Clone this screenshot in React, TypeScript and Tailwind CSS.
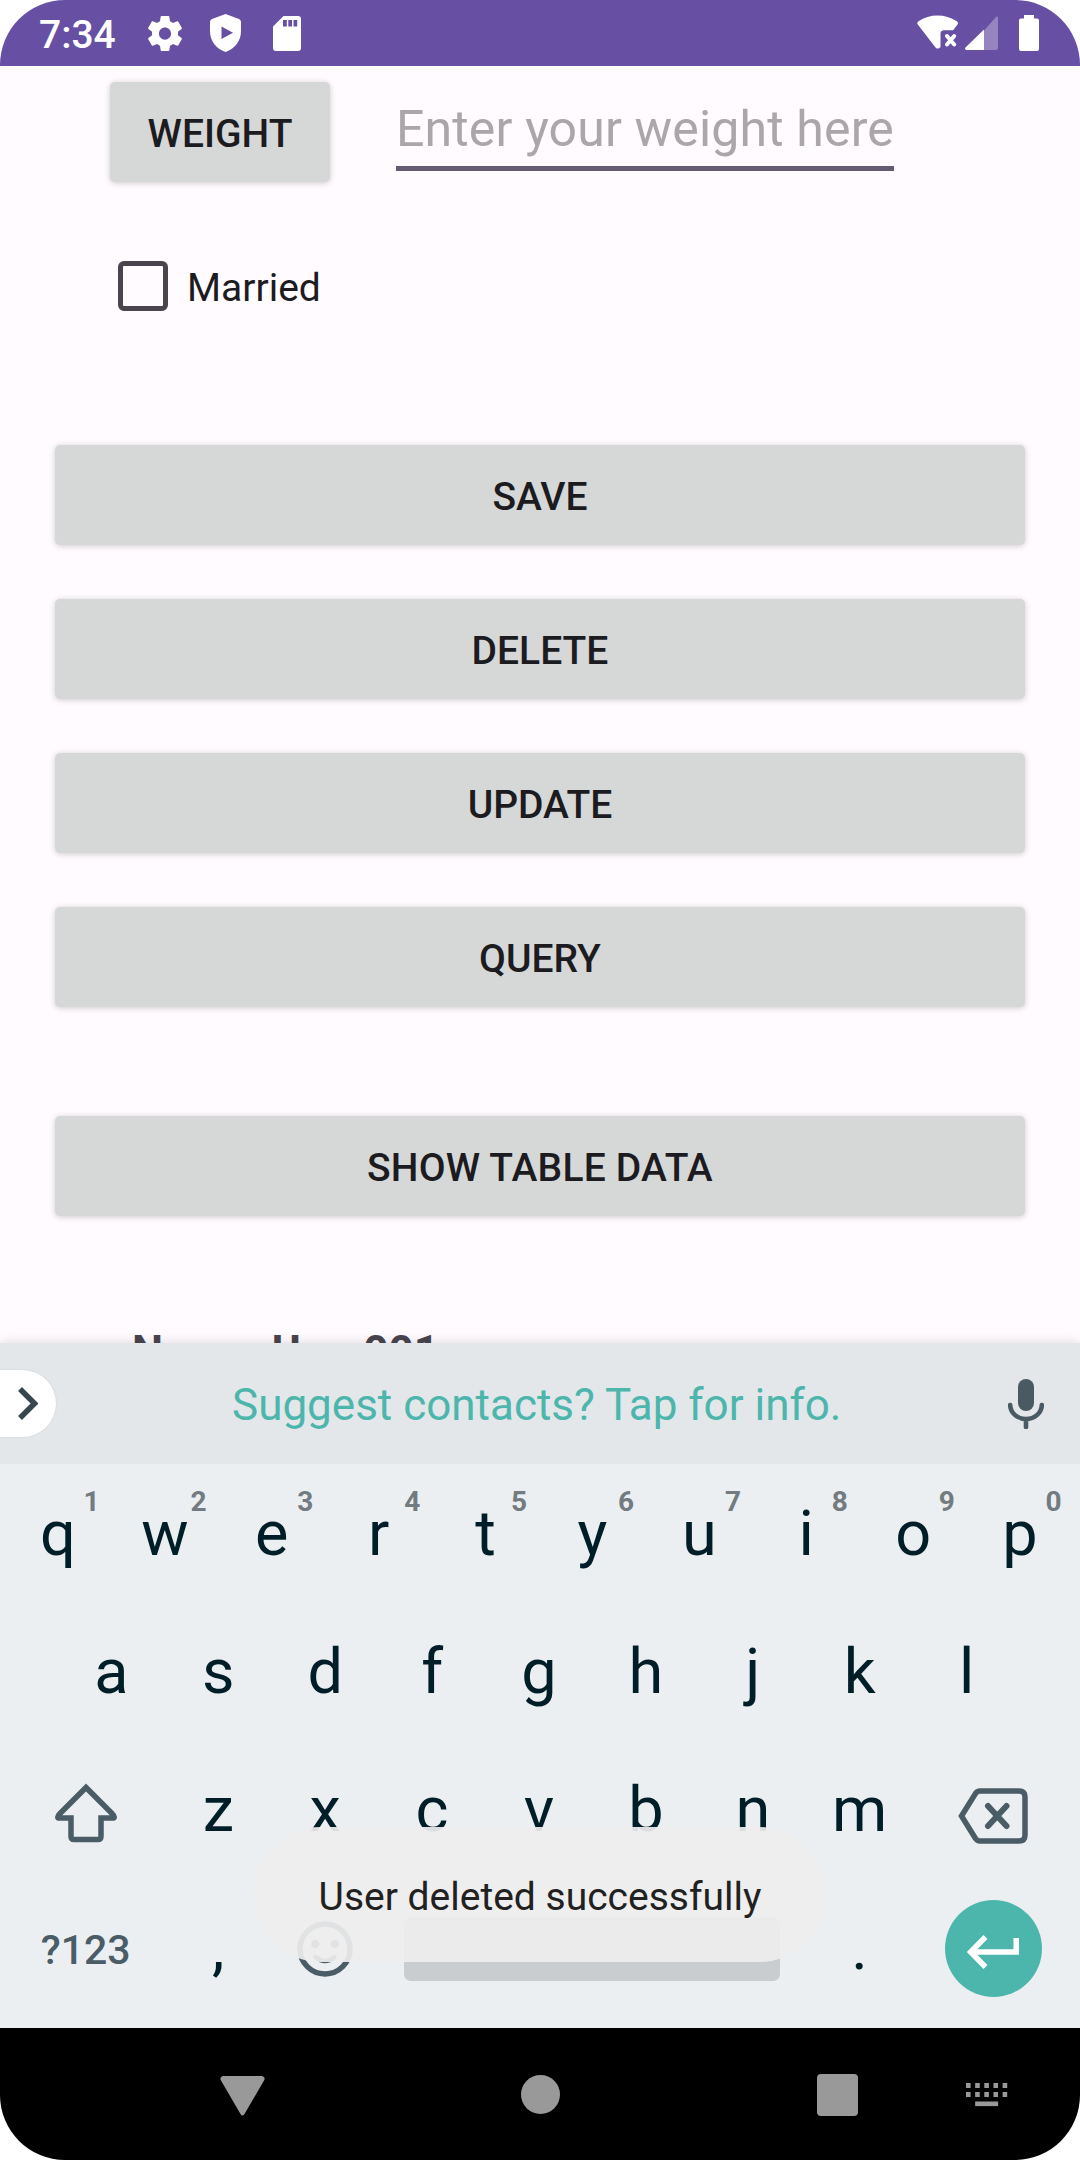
import React from "react";

function StatusBar() {
  return (
    <header className="flex h-[66px] shrink-0 items-center bg-[#6750a4] pl-[39px] pr-[41px] text-white">
      <span className="mt-[3px] w-[109px] text-[39px] font-medium leading-[46px]">7:34</span>
      <svg className="h-[35px] w-[34px]" viewBox="2.2 2 19.6 20" preserveAspectRatio="none" fill="currentColor">
        <path d="M19.43 12.98c.04-.32.07-.64.07-.98s-.03-.66-.07-.98l2.11-1.65c.19-.15.24-.42.12-.64l-2-3.46c-.12-.22-.39-.3-.61-.22l-2.49 1c-.52-.4-1.08-.73-1.69-.98l-.38-2.65C14.46 2.18 14.25 2 14 2h-4c-.25 0-.46.18-.49.42l-.38 2.65c-.61.25-1.17.59-1.69.98l-2.49-1c-.23-.09-.49 0-.61.22l-2 3.46c-.13.22-.07.49.12.64l2.11 1.65c-.04.32-.07.65-.07.98s.03.66.07.98l-2.11 1.65c-.19.15-.24.42-.12.64l2 3.46c.12.22.39.3.61.22l2.49-1c.52.4 1.08.73 1.69.98l.38 2.65c.03.24.24.42.49.42h4c.25 0 .46-.18.49-.42l.38-2.65c.61-.25 1.17-.59 1.69-.98l2.49 1c.23.09.49 0 .61-.22l2-3.46c.12-.22.07-.49-.12-.64l-2.11-1.65zM12 15.5c-1.93 0-3.5-1.57-3.5-3.5s1.57-3.5 3.5-3.5 3.5 1.57 3.5 3.5-1.57 3.5-3.5 3.5z" />
      </svg>
      <svg className="ml-[28px] h-[38px] w-[31px]" viewBox="0 0 31 38" fill="currentColor">
        <path fillRule="evenodd" d="M15.500 0 29 5q2 .8 2 3v9c0 10-6 17.500-15.500 21C6 34.500 0 27 0 17V8q0-2.200 2-3zM11.500 12.500v12.500L23 18.700z" />
      </svg>
      <svg className="ml-[32px] h-[35px] w-[28px]" viewBox="0 0 28 35" fill="currentColor">
        <path fillRule="evenodd" d="M10.500 0H25q3 0 3 3v29q0 3-3 3H3q-3 0-3-3V10.500zM10 4v6.500h3.800V4zM15.300 4v6.500H19V4zM20.500 4v6.500h3.700V4z" />
      </svg>
      <div className="ml-auto flex items-center">
        <svg className="h-[36px] w-[42px]" viewBox="0 0 42 36">
          <path fill="white" d="M.8 9.500Q-.6 7.700 1.500 6.300 10 .5 20.500.5T39.800 6.300q2 1.400.7 3.200l-4.400 5.700H27q-3.500 0-3.500 3.500V32q-2.500 3-5 .4z" />
          <path stroke="white" strokeWidth="4" strokeLinecap="round" d="m30 21 7.200 8.500M37.200 21 30 29.500" />
        </svg>
        <svg className="ml-[6px] h-[34px] w-[33px]" viewBox="0 0 33 34">
          <path fill="white" fillOpacity=".3" d="M19 14.500 31 1q2-1.200 2 1.200V32q0 2-2 2H19z" />
          <path fill="white" d="M19 13.500V34H1.500q-2.500-.6-1-2.400z" />
        </svg>
        <svg className="ml-[21px] h-[36px] w-[20px]" viewBox="0 0 20 36" fill="white">
          <path d="M5 0h10v3.500h3q2 0 2 2V34q0 2-2 2H2q-2 0-2-2V5.500q0-2 2-2h3z" />
        </svg>
      </div>
    </header>
  );
}

function RaisedButton({ label, className }: { label: string; className: string }) {
  return (
    <button
      className={
        "flex h-[100px] shrink-0 items-center justify-center rounded-[5px] bg-[#d6d8d7] pt-[4px] text-[39px] font-medium leading-[46px] text-[#1c1b1f] shadow-[0_1px_6px_rgba(0,0,0,0.2)] " +
        className
      }
    >
      {label}
    </button>
  );
}

function Form() {
  return (
    <main className="flex h-[1277px] shrink-0 flex-col overflow-hidden bg-[#fffbff] px-[55px] pt-[16px]">
      <div className="flex h-[100px] shrink-0 items-start pl-[55px]">
        <RaisedButton label="WEIGHT" className="w-[220px]" />
        <div className="ml-[66px] h-[89px] w-[498px] border-b-[5.5px] border-[#645b73] pt-[17px] text-[50px] leading-[60px] tracking-[0.15px] whitespace-nowrap text-[#a9a7aa]">
          Enter your weight here
        </div>
      </div>
      <label className="mt-[79px] flex h-[50px] shrink-0 items-center pl-[63px] text-[39px] leading-[46px] text-[#1c1b1f]">
        <span className="size-[50px] rounded-[6px] border-[5.5px] border-[#49454f]" />
        <span className="ml-[19px] mt-[4px]">Married</span>
      </label>
      <div className="mt-[134px] flex flex-col gap-[54px]">
        <RaisedButton label="SAVE" className="w-full" />
        <RaisedButton label="DELETE" className="w-full" />
        <RaisedButton label="UPDATE" className="w-full" />
        <RaisedButton label="QUERY" className="w-full" />
      </div>
      <RaisedButton label="SHOW TABLE DATA" className="mt-[109px] w-full tracking-[0.2px]" />
      <p className="mt-[110px] shrink-0 pl-[77px] text-[44px] font-bold leading-[52px] text-[#49454f]">Name: User001</p>
    </main>
  );
}

function LetterKey({ label, hint }: { label: string; hint?: string }) {
  return (
    <div className="relative flex h-[138px] w-[106.9px] items-center justify-center pt-[2px] pr-[2px] text-[63px] leading-[74px] text-[#001e28]">
      {label}
      {hint && (
        <span className="absolute left-[78px] top-[21px] text-[28px] font-bold leading-[33px] text-[#717b80]">{hint}</span>
      )}
    </div>
  );
}

const topRow: [string, string][] = [
  ["q", "1"],
  ["w", "2"],
  ["e", "3"],
  ["r", "4"],
  ["t", "5"],
  ["y", "6"],
  ["u", "7"],
  ["i", "8"],
  ["o", "9"],
  ["p", "0"],
];

function Keyboard() {
  return (
    <section className="relative flex h-[685px] shrink-0 flex-col bg-[#ebeff2] shadow-[0_0_12px_rgba(0,0,0,0.14)]">
      <div className="flex h-[121px] shrink-0 items-center bg-[#e3e7ea]">
        <div className="flex h-[67px] w-[56px] items-center rounded-r-full bg-white pl-[18px] shadow-[0_0_2px_rgba(0,0,0,0.12)]">
          <svg className="h-[33px] w-[20px]" viewBox="0 0 20 33" fill="none" stroke="#37474f" strokeWidth="5.500">
            <path d="m2 2 14.500 14.500L2 31" />
          </svg>
        </div>
        <span className="mt-[3px] flex-1 pl-[176px] text-[44px] leading-[52px] text-[#4db6ac]">
          Suggest contacts? Tap for info.
        </span>
        <svg className="mr-[36px] h-[50px] w-[36px]" viewBox="0 0 36 50" fill="none" stroke="#4a5a62">
          <rect x="10" y="0" width="16" height="32" rx="8" fill="#4a5a62" stroke="none" />
          <path d="M2.200 26a15.800 14 0 0 0 31.600 0M18 40v8" strokeWidth="4.600" strokeLinecap="round" />
        </svg>
      </div>
      <div className="flex justify-center">
        {topRow.map(([k, n]) => (
          <LetterKey key={k} label={k} hint={n} />
        ))}
      </div>
      <div className="flex justify-center">
        {"asdfghjkl".split("").map((k) => (
          <LetterKey key={k} label={k} />
        ))}
      </div>
      <div className="flex justify-center">
        <div className="flex h-[138px] w-[160.4px] items-center justify-center">
          <svg className="mt-[7px] h-[62px] w-[62px]" viewBox="0 0 62 62" fill="none" stroke="#4a5c65" strokeWidth="5.500" strokeLinejoin="round">
            <path d="M31 5.500 5 31.500q-4.500 4.500 0 4.500h11v18.500q0 3 3 3h24q3 0 3-3V36h11q4.500 0 0-4.500z" strokeLinejoin="miter" />
          </svg>
        </div>
        {"zxcvbnm".split("").map((k) => (
          <LetterKey key={k} label={k} />
        ))}
        <div className="flex h-[138px] w-[160.4px] items-center justify-center pr-[3px]">
          <svg className="mt-[14px] h-[56px] w-[70px]" viewBox="0 0 70 56" fill="none" stroke="#4a5c65" strokeWidth="5.500">
            <path d="M3.500 28 17.500 5.500Q19.200 3 22 3h39q6 0 6 6v38q0 6-6 6H22q-2.800 0-4.500-2.500z" />
            <path strokeLinecap="round" strokeWidth="6" d="m30 18 18.500 20M48.500 18 30 38" />
          </svg>
        </div>
      </div>
      <div className="flex justify-center">
        <div className="flex h-[138px] w-[160.4px] items-center justify-center pt-[5px] text-[41px] font-medium leading-[48px] text-[#4a5c65]">
          ?123
        </div>
        <LetterKey label="," />
        <div className="flex h-[138px] w-[106.9px] items-center justify-center">
          <svg className="mt-[3px] mr-[2px] size-[56px]" viewBox="0 0 56 56" fill="none" stroke="#4a5c65">
            <circle cx="28" cy="28" r="25" strokeWidth="5.500" />
            <circle cx="18.300" cy="23" r="4" fill="#4a5c65" stroke="none" />
            <circle cx="37.700" cy="23" r="4" fill="#4a5c65" stroke="none" />
            <path d="M18.500 36q9.500 8 19 0" strokeWidth="4.500" strokeLinecap="round" />
          </svg>
        </div>
        <div className="flex h-[138px] w-[427.6px] items-center pl-[24px]">
          <div className="mt-[3px] h-[64px] w-[376px] rounded-[7px] bg-[#c9cdd0]" />
        </div>
        <LetterKey label="." />
        <div className="flex h-[138px] w-[160.4px] items-center justify-center pr-[2px]">
          <div className="mt-[3px] flex size-[97px] items-center justify-center rounded-full bg-[#4db6ac]">
            <svg className="mt-[6px] h-[34px] w-[52px]" viewBox="0 0 52 34" fill="none" stroke="white" strokeWidth="5.500">
              <path d="M49.200 3v14H4M18.500 2 3.700 17l14.800 15" />
            </svg>
          </div>
        </div>
      </div>
      <div className="absolute left-[253px] top-[484px] flex h-[135px] w-[574px] items-center justify-center rounded-full bg-[#eeeeee]/92 pt-[4px] text-[39px] leading-[46px] whitespace-nowrap text-[#212121]">
        User deleted successfully
      </div>
    </section>
  );
}

function NavigationBar() {
  return (
    <nav className="flex h-[132px] shrink-0 items-center bg-black pl-[220px]">
      <svg className="mt-[4px] h-[40px] w-[45px]" viewBox="0 0 45 40" fill="#999">
        <path d="M3 0h39q3.500.7 2.300 4L24.500 38q-2 3-4 0L.7 4Q-.5.700 3 0z" />
      </svg>
      <div className="ml-[256px] size-[39px] rounded-full bg-[#999999]" />
      <div className="ml-[257px] mt-[1px] h-[42px] w-[41px] rounded-[4px] bg-[#999999]" />
      <svg className="ml-[108px] mt-[1px] h-[24px] w-[42px]" viewBox="0 0 42 24" fill="#999">
        {[0, 1, 2, 3, 4].map((i) => (
          <g key={i}>
            <rect x={i * 9.15} y="0" width="4.600" height="5" />
            <rect x={i * 9.15} y="9" width="4.600" height="5" />
          </g>
        ))}
        <rect x="9.150" y="18.500" width="23" height="4.600" />
      </svg>
    </nav>
  );
}

export default function App() {
  return (
    <div className="h-[2160px] w-[1080px] bg-white font-['Roboto',sans-serif]">
      <div className="flex h-full w-full flex-col overflow-hidden rounded-[65px]">
        <StatusBar />
        <Form />
        <Keyboard />
        <NavigationBar />
      </div>
    </div>
  );
}
